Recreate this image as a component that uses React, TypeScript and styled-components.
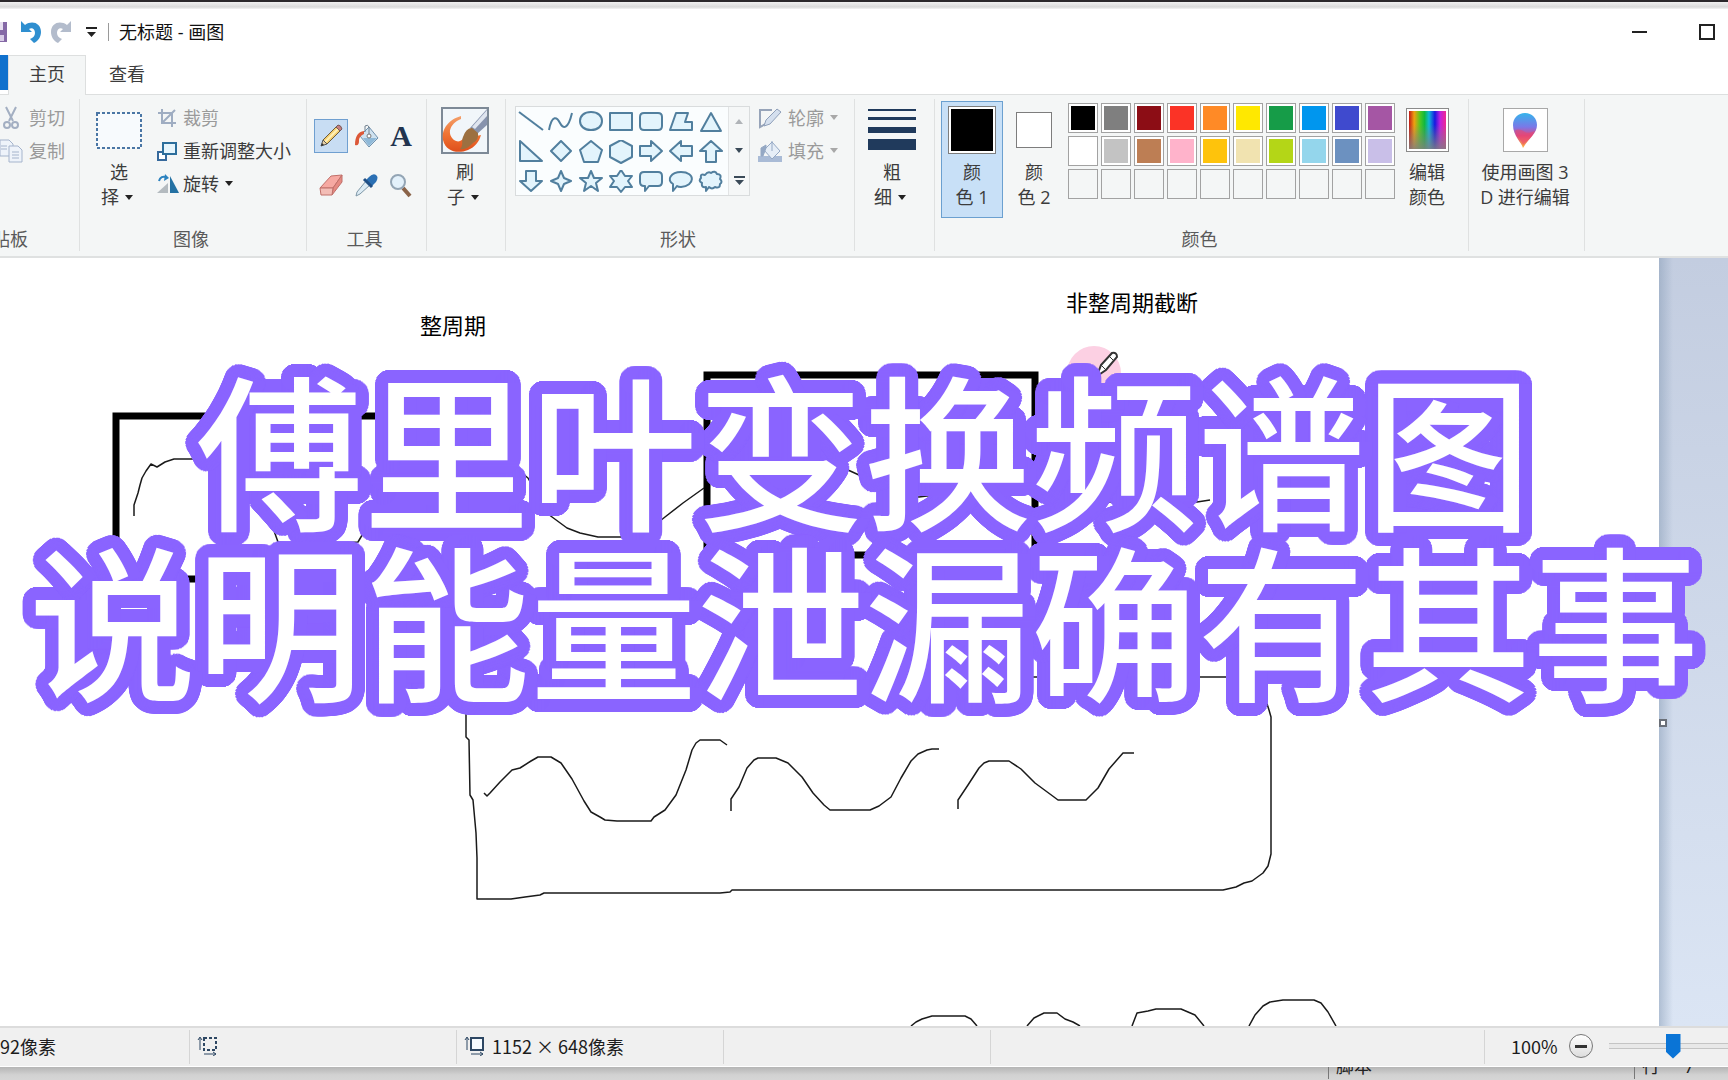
import React from "react";
import styled, { createGlobalStyle } from "styled-components";

const UI_FONT = '"Open Sans", "Noto Sans CJK SC", "Noto Sans", sans-serif';

const GlobalStyle = createGlobalStyle`
  *, *::before, *::after { box-sizing: border-box; }
  body { margin: 0; background: #ffffff; font-family: ${UI_FONT}; font-size: 18px; color: #3c3c3c; }
  button, input { font: inherit; color: inherit; margin: 0; padding: 0; border: 0; background: none; }
  svg { display: block; flex: none; }
`;

/* ---------- frame ---------- */

const Screen = styled.div`
  position: relative;
  display: flex;
  flex-direction: column;
  min-height: 100vh;
  overflow: hidden;
`;

const TopEdge = styled.div`
  height: 9px;
  border-top: 2px solid #2b282b;
  background: linear-gradient(#f0f0f0, #dadada 70%, #f4f4f4);
`;

const TitleBar = styled.header`
  display: flex;
  align-items: center;
  height: 46px;
  background: #ffffff;
`;

const QuickTools = styled.div`
  display: flex;
  align-items: center;
  gap: 10px;
`;

const QuickButton = styled.button<{ $w: number }>`
  display: flex;
  justify-content: flex-end;
  width: ${(p) => p.$w}px;
  height: 24px;
  align-items: center;
`;

const TitleRule = styled.span`
  width: 1px;
  height: 18px;
  margin: 0 10px 0 11px;
  background: #9a9a9a;
`;

const Title = styled.h1`
  margin: 0;
  font-size: 18px;
  font-weight: 400;
  line-height: 24px;
  color: #111111;
`;

const WindowControls = styled.div`
  display: flex;
  margin-left: auto;
  margin-right: -12px;
`;

const WindowButton = styled.button`
  display: flex;
  align-items: center;
  justify-content: center;
  width: 67px;
  height: 46px;
`;

const TabStrip = styled.nav`
  display: flex;
  height: 40px;
  background: #ffffff;
  border-bottom: 1px solid #dddfdf;
`;

const FileTab = styled.button`
  width: 8px;
  height: 35px;
  background: #1071cd;
`;

const Tab = styled.button<{ $active?: boolean }>`
  width: ${(p) => (p.$active ? 78 : 82)}px;
  height: 40px;
  padding-bottom: 4px;
  border: 1px solid ${(p) => (p.$active ? "#dddfdf" : "transparent")};
  border-bottom: 0;
  background: ${(p) => (p.$active ? "#f4f6f6" : "transparent")};
  line-height: 30px;
`;

/* ---------- ribbon ---------- */

const Ribbon = styled.section`
  display: flex;
  height: 163px;
  padding: 4px 0 5px;
  background: #f4f6f6;
  border-bottom: 2px solid #dfe1e1;
`;

const Group = styled.div<{ $w: number }>`
  display: flex;
  flex-direction: column;
  flex: none;
  width: ${(p) => p.$w}px;
  border-right: 1px solid #dfe1e1;
  overflow: hidden;
`;

const GroupBody = styled.div<{ $pad?: number }>`
  display: flex;
  flex: 1;
  align-items: flex-start;
  padding: 2px 0 0 ${(p) => p.$pad ?? 0}px;
`;

const GroupLabel = styled.div`
  line-height: 24px;
  text-align: center;
  color: #5a5a5a;
  height: 24px;
  padding-right: 4px;
`;

const CutLabel = styled(GroupLabel)`
  display: flex;
  justify-content: flex-end;
  width: 28px;
  padding-right: 0;
  white-space: nowrap;
`;

const BigButton = styled.button<{ $w: number; $active?: boolean }>`
  display: flex;
  flex-direction: column;
  align-items: center;
  gap: 7px;
  flex: none;
  width: ${(p) => p.$w}px;
  height: 117px;
  padding-top: 5px;
  border: 1px solid ${(p) => (p.$active ? "#6ba0d0" : "transparent")};
  background: ${(p) => (p.$active ? "#c8e0f7" : "transparent")};
`;

const BigIcon = styled.span`
  display: flex;
  align-items: center;
  justify-content: center;
  height: 46px;
`;

const BigText = styled.span`
  line-height: 25px;
  text-align: center;
  white-space: nowrap;
`;

const WithCaret = styled.span`
  display: flex;
  align-items: center;
  justify-content: center;
  gap: 6px;
  padding-right: 4px;
`;

const Rows = styled.div<{ $gap: number }>`
  display: flex;
  flex-direction: column;
  margin-left: ${(p) => p.$gap}px;
`;

const RowButton = styled.button<{ $dim?: boolean; $icon: number }>`
  display: grid;
  grid-template-columns: ${(p) => p.$icon}px auto auto;
  align-items: center;
  justify-content: start;
  gap: 6px;
  height: 33px;
  line-height: 24px;
  white-space: nowrap;
  color: ${(p) => (p.$dim ? "#9a9a9a" : "#3c3c3c")};
`;

const ToolGrid = styled.div`
  display: grid;
  grid-template-columns: repeat(3, 34px);
  grid-auto-rows: 34px;
  gap: 15px 1px;
  padding-top: 18px;
`;

const ToolButton = styled.button<{ $active?: boolean }>`
  display: flex;
  align-items: center;
  justify-content: center;
  border: 1px solid ${(p) => (p.$active ? "#6f9fd0" : "transparent")};
  background: ${(p) => (p.$active ? "#c8ddf3" : "transparent")};
`;

const LetterA = styled.span`
  font: bold 30px "Liberation Serif", serif;
  color: #22344f;
`;

const Gallery = styled.div`
  display: flex;
  margin-top: 5px;
  border: 1px solid #d9dcdd;
  background: #fafdfe;
`;

const ShapeGrid = styled.div`
  display: grid;
  grid-template-columns: repeat(7, 30px);
  grid-auto-rows: 30px;
  height: 88px;
  width: 212px;
`;

const ShapeButton = styled.button`
  display: flex;
  align-items: center;
  justify-content: center;
  height: 30px;
`;

const GalleryScroll = styled.div`
  display: grid;
  grid-template-rows: repeat(3, 1fr);
  width: 21px;
  border-left: 1px solid #e2e4e5;
  background: #f5f7f7;
`;

const ScrollButton = styled.button`
  display: flex;
  align-items: center;
  justify-content: center;
`;

const Swatch = styled.span<{ $size: number; $color: string }>`
  width: ${(p) => p.$size}px;
  height: ${(p) => p.$size}px;
  padding: 2px;
  border: 1px solid #7d7d7d;
  background: linear-gradient(${(p) => p.$color}, ${(p) => p.$color}) content-box, #ffffff;
`;

const Palette = styled.div`
  display: grid;
  grid-template-columns: repeat(10, 30px);
  grid-auto-rows: 30px;
  gap: 3px;
  padding-top: 2px;
  margin: 0 1px 0 3px;
`;

const PaletteButton = styled.button<{ $color?: string }>`
  padding: 2px;
  border: 1px solid #a2a2a2;
  background: ${(p) => (p.$color ? `linear-gradient(${p.$color}, ${p.$color}) content-box, #ffffff` : "transparent")};
`;

const Spectrum = styled.span`
  width: 43px;
  height: 44px;
  padding: 2px;
  border: 1px solid #8a8a8a;
  background:
    linear-gradient(transparent 35%, rgba(128, 128, 128, 0.85)) content-box,
    linear-gradient(90deg, #c01818, #f0a010 14%, #50c820 30%, #10b840 42%, #10b8d8 54%, #1818e0 70%, #c020e0 84%, #f02890) content-box,
    #ffffff;
`;

const IconFrame = styled.span`
  display: flex;
  align-items: center;
  justify-content: center;
  width: 45px;
  height: 44px;
  border: 1px solid #a8a8a8;
  background: #ffffff;
`;

/* ---------- canvas ---------- */

const Workspace = styled.main`
  display: flex;
  flex: 1;
  height: 768px;
`;

const Paper = styled.div`
  position: relative;
  flex: 1;
  background: #ffffff;
  overflow: hidden;
`;

const CanvasText = styled.span<{ $x: number; $y: number }>`
  position: absolute;
  left: ${(p) => p.$x}px;
  top: ${(p) => p.$y}px;
  font-size: 22px;
  line-height: 30px;
  color: #000000;
  white-space: nowrap;
`;

const Backdrop = styled.div`
  display: flex;
  align-items: center;
  width: 69px;
  padding-top: 162px;
  background:
    linear-gradient(90deg, rgba(140, 160, 185, 0.55), transparent 14px),
    linear-gradient(#c3cde0, #dbe5f4);
`;

const ResizeHandle = styled.span`
  width: 8px;
  height: 8px;
  border: 2px solid #6a6f78;
  background: #ffffff;
`;

/* ---------- status ---------- */

const StatusBar = styled.footer`
  display: flex;
  height: 41px;
  padding: 2px 0;
  background: #f0f0f0;
  border-top: 2px solid #dcdcdc;
  border-bottom: 1px solid #ffffff;
  font-family: "Noto Sans CJK SC", sans-serif;
  color: #1c1c1c;
`;

const StatusCell = styled.div<{ $w?: number }>`
  display: flex;
  align-items: center;
  gap: 8px;
  flex: ${(p) => (p.$w ? "none" : "1")};
  width: ${(p) => (p.$w ? `${p.$w}px` : "auto")};
  padding-left: 7px;
  border-right: 1px solid #d5d5d5;
  line-height: 22px;
  padding-bottom: 2px;
  white-space: nowrap;
`;

const FirstCell = styled(StatusCell)`
  padding-left: 0;
`;

const ZoomArea = styled.div`
  display: flex;
  flex: none;
  align-items: center;
  width: 243px;
  padding: 0 0 2px 26px;
  overflow: hidden;
`;

const ZoomValue = styled.label`
  flex: none;
  width: 58px;
  line-height: 22px;
`;

const ZoomOut = styled.button`
  width: 24px;
  height: 24px;
  flex: none;
  border: 1px solid #777777;
  border-radius: 50%;
  background: linear-gradient(#333333, #333333) center / 12px 3px no-repeat, linear-gradient(#ffffff, #dddddd);
`;

const ZoomSlider = styled.input`
  appearance: none;
  flex: none;
  width: 128px;
  height: 26px;
  margin-left: 16px;
  background: linear-gradient(#e8e8e8, #e8e8e8) center / 100% 4px no-repeat, linear-gradient(#c4c4c4, #c4c4c4) center / 100% 6px no-repeat;

  &::-webkit-slider-thumb {
    appearance: none;
    width: 15px;
    height: 25px;
    background: #0a74d6;
    clip-path: polygon(0 0, 100% 0, 100% 72%, 50% 100%, 0 72%);
  }
`;

const UnderStrip = styled.div`
  display: flex;
  justify-content: flex-end;
  height: 14px;
  overflow: hidden;
  background: linear-gradient(#b5b5b5, #d2d2d2 8px, #d6d6d6);
  color: #222222;
`;

const UnderCell = styled.div<{ $w: number }>`
  display: flex;
  align-items: flex-end;
  gap: 24px;
  width: ${(p) => p.$w}px;
  height: 12px;
  padding: 0 0 2px 7px;
  border-left: 1px solid #777777;
  line-height: 22px;
  white-space: nowrap;
`;

/* ---------- caption ---------- */

const OUTLINE = "#8a64ff";

/* a disc of hard shadows gives the caption a thick outline with round corners */
const ring = (radius: number, steps: number) =>
  Array.from({ length: steps }, (_, i) => {
    const a = (i / steps) * Math.PI * 2;
    return `${(Math.cos(a) * radius).toFixed(2)}px ${(Math.sin(a) * radius).toFixed(2)}px 0 ${OUTLINE}`;
  });

const outlineShadow = [...ring(13, 56), ...ring(7, 20)].join(", ");

const Caption = styled.div`
  position: absolute;
  inset: 0;
  display: flex;
  align-items: center;
  justify-content: center;
  padding-bottom: 20px;
  pointer-events: none;
`;

const CaptionText = styled.p`
  margin: 0;
  font-family: "Noto Sans CJK SC", sans-serif;
  font-size: 167px;
  font-weight: 500;
  line-height: 171px;
  text-align: center;
  white-space: nowrap;
  color: #ffffff;
  text-shadow: ${outlineShadow};
`;

/* ---------- icons ---------- */

const Caret = ({ color = "#222222" }: { color?: string }) => (
  <svg width="8" height="5" viewBox="0 0 8 5"><path d="M0 0h8L4 5z" fill={color} /></svg>
);

const SaveIcon = () => (
  <svg width="8" height="22" viewBox="0 0 8 22">
    <path d="M0 1h7v20H0z" fill="#8569a6" /><path d="M0 1h3v8H0z" fill="#e6deef" /><path d="M0 14h4v6H0z" fill="#d8cce6" />
  </svg>
);

const UndoIcon = ({ redo }: { redo?: boolean }) => (
  <svg width="21" height="22" viewBox="0 0 21 22">
    <g transform={redo ? "translate(21 0) scale(-1 1)" : undefined} fill={redo ? "#b3bccc" : "#2f8fd0"}>
      <path d="M1 0v11h11L9 8c3-2 6 0 6 4 0 3-2 5-5 6l4 4c4-2 7-6 7-11C21 2 12-1 5 4z" />
    </g>
  </svg>
);

const CustomizeIcon = () => (
  <svg width="11" height="10" viewBox="0 0 11 10"><path d="M0 0h11v2H0zM1 5h9L5.500 10z" fill="#222" /></svg>
);

const ScissorsIcon = () => (
  <svg width="24" height="24" viewBox="0 0 24 24" fill="none" stroke="#a3afc2" strokeWidth="2">
    <path d="M6 1l7 14M16 1L9 15" /><circle cx="7" cy="19" r="3" /><circle cx="15" cy="19" r="3" />
  </svg>
);

const CopyIcon = () => (
  <svg width="24" height="24" viewBox="0 0 24 24" fill="#eef3fa" stroke="#a5b4cc">
    <path d="M0 1h9l4 4v12H0z" /><path d="M9 7h9l4 4v12H9z" /><path d="M12 13h7M12 16h7M12 19h7M1 7h6M1 10h6" />
  </svg>
);

const SelectIcon = () => (
  <svg width="46" height="37" viewBox="0 0 46 37">
    <rect x="1" y="1" width="44" height="35" fill="#f7fafd" stroke="#4a76a5" strokeWidth="2" strokeDasharray="3 2" />
  </svg>
);

const CropIcon = () => (
  <svg width="20" height="20" viewBox="0 0 20 20" fill="none" stroke="#9fadc2" strokeWidth="2">
    <path d="M5 1v14h14M1 5h14v14M6 14L18 2" />
  </svg>
);

const ResizeIcon = () => (
  <svg width="20" height="20" viewBox="0 0 20 20" strokeWidth="2">
    <rect x="1" y="11" width="8" height="8" fill="#fff" stroke="#36699c" /><rect x="6" y="2" width="13" height="11" fill="#e6f5fc" stroke="#2c6e9c" />
  </svg>
);

const RotateIcon = () => (
  <svg width="22" height="20" viewBox="0 0 22 20">
    <path d="M0 19L11 9v10z" fill="#b4bbc0" /><path d="M13 19V2l9 17z" fill="#2471a3" />
    <path d="M2 7c1-4 4-5 7-4" fill="none" stroke="#2c82bf" strokeWidth="2" /><path d="M8 0l4 4-5 3z" fill="#2c82bf" />
  </svg>
);

const PencilIcon = () => (
  <svg width="24" height="24" viewBox="0 0 24 24" strokeWidth="1">
    <path d="M4 16L17 3l4 4L8 20z" fill="#f4cf70" stroke="#6c5a3c" /><path d="M6 18L19 5" stroke="#fff0b8" strokeWidth="2" />
    <path d="M17 3l2-2q3 0 4 4l-2 2z" fill="#c78080" stroke="#775a5a" /><path d="M4 16l-2 6 6-2z" fill="#e8d2a8" stroke="#555" /><path d="M2 22l1-3 2 2z" fill="#333" />
  </svg>
);

const BucketIcon = () => (
  <svg width="25" height="25" viewBox="0 0 25 25">
    <path d="M6 12l9-9 9 11-9 9z" fill="#cfe2f0" stroke="#7091ad" /><path d="M9 14h14l-8 8z" fill="#8fb9d8" />
    <path d="M15 12V3q-1-3-4-1v6" fill="none" stroke="#70808f" /><circle cx="15" cy="12" r="2" fill="#fff" stroke="#777" />
    <path d="M10 7C4 8 1 12 1 21c3 1 4-1 4-4s1-5 5-7z" fill="#dc5838" />
  </svg>
);

const EraserIcon = () => (
  <svg width="25" height="24" viewBox="0 0 25 24" stroke="#c0706a">
    <path d="M1 15L12 3l11-1-9 13z" fill="#f6a9a2" /><path d="M14 15l9-13v7L13 22z" fill="#e58a82" /><path d="M1 15h13l-1 7H2z" fill="#f3bdb6" />
  </svg>
);

const DropperIcon = () => (
  <svg width="24" height="24" viewBox="0 0 24 24">
    <path d="M12 8l4 4L6 21l-4 2 1-4z" fill="#dcebf4" stroke="#7f98a8" /><path d="M15 4q4-4 7-2t0 7l-4 4-6-6z" fill="#2b70b4" />
    <path d="M10 6l8 8" stroke="#204f85" strokeWidth="3" />
  </svg>
);

const MagnifierIcon = () => (
  <svg width="24" height="25" viewBox="0 0 24 25">
    <path d="M14 15l7 8" stroke="#8a6348" strokeWidth="4" /><circle cx="9" cy="9" r="7" fill="#e3f1fb" stroke="#93a5b5" strokeWidth="2" />
  </svg>
);

const BrushIcon = () => (
  <svg width="48" height="47" viewBox="0 0 48 47">
    <defs>
      <linearGradient id="paint" x1="0" y1="0" x2="0" y2="1">
        <stop offset="0" stopColor="#f3a06c" /><stop offset="0.5" stopColor="#f07434" /><stop offset="1" stopColor="#df4f1c" />
      </linearGradient>
    </defs>
    <rect x="1" y="1" width="46" height="45" fill="#f1f6fa" stroke="#7d8996" strokeWidth="2" />
    <path d="M20 9C9 12 0 21 2 33c3 12 15 14 25 10 7-3 11-8 13-15l-18 4c-3 3-6 3-9 1-7-6-5-16 7-21z" fill="url(#paint)" />
    <path d="M46 2L29 21l7 6 10-9z" fill="#8793ad" /><path d="M46 3L31 20l3 2L46 9z" fill="#dfe5ef" />
    <path d="M22 30q3-9 9-9l6 5q1 7-5 10c-4 4-8 7-13 6 4-4 1-8 3-12z" fill="#9c7041" />
  </svg>
);

const OutlineIcon = () => (
  <svg width="24" height="22" viewBox="0 0 24 22">
    <path d="M14 3H2v17l9-5" fill="none" stroke="#97a4b9" strokeWidth="2" /><path d="M6 19l2-6L19 2l4 3-11 12z" fill="#d4dfee" stroke="#8fa0ba" />
  </svg>
);

const FillIcon = () => (
  <svg width="24" height="24" viewBox="0 0 24 24">
    <path d="M0 17h24v6H0z" fill="#a9bbd6" /><path d="M6 11l8-8 8 9-8 8z" fill="#e6eef7" stroke="#94a8c4" /><path d="M14 12V2M3 17V9l5-3v3l-3 8z" stroke="#94a8c4" fill="#94a8c4" />
  </svg>
);

const WeightIcon = () => (
  <svg width="48" height="42" viewBox="0 0 48 42" fill="#203a5c">
    <path d="M0 0h48v2H0zM0 8h48v3H0zM0 18h48v6H0zM0 30h48v11H0z" />
  </svg>
);

const Paint3DIcon = () => (
  <svg width="26" height="37" viewBox="0 0 26 37">
    <defs>
      <linearGradient id="drop" x1="0" y1="0" x2="0" y2="1">
        <stop offset="0" stopColor="#35b5ec" /><stop offset="0.4" stopColor="#7a78e8" /><stop offset="0.65" stopColor="#dc4884" /><stop offset="1" stopColor="#ffb43c" />
      </linearGradient>
    </defs>
    <path d="M13 1c7 0 12 5 12 12 0 9-9 14-14 23-1-5-10-12-10-23C1 6 6 1 13 1z" fill="url(#drop)" />
    <path d="M3 19c3-3 7-1 10 1s7 0 10-1c-3 6-8 10-12 14-1-4-5-8-8-14z" fill="#ef4468" opacity="0.500" />
  </svg>
);

const SizeIcon = ({ dashed }: { dashed?: boolean }) => (
  <svg width="20" height="20" viewBox="0 0 20 20" fill="none" stroke="#2d4763">
    <path d="M3 14V2M1 4l2-3 2 3M7 18h12M16 16l3 2-3 2" />
    <rect x="7" y="2" width="12" height="12" fill={dashed ? "none" : "#f6fbff"} strokeWidth="2" strokeDasharray={dashed ? "3 2" : undefined} />
  </svg>
);

const shapes: { name: string; d: string }[] = [
  { name: "直线", d: "M1 2L25 20" },
  { name: "曲线", d: "M1 20C4 4 9 7 12 13S20 20 24 3" },
  { name: "椭圆", d: "M13 2C20 2 24 6 24 11S20 20 13 20 2 16 2 11 6 2 13 2z" },
  { name: "矩形", d: "M2 3h22v17H2z" },
  { name: "圆角矩形", d: "M6 3h14q4 0 4 4v9q0 4-4 4H6q-4 0-4-4V7q0-4 4-4z" },
  { name: "多边形", d: "M8 3h12l-3 9h7v8H2z" },
  { name: "三角形", d: "M13 3l10 18H3z" },
  { name: "直角三角形", d: "M2 1v20h22z" },
  { name: "菱形", d: "M13 1l10 10-10 10L3 11z" },
  { name: "五边形", d: "M13 1l11 9-4 12H6L2 10z" },
  { name: "六边形", d: "M13 0l11 6v11l-11 6-11-6V6z" },
  { name: "右箭头", d: "M2 6h11V1l11 10-11 10v-5H2z" },
  { name: "左箭头", d: "M24 6H13V1L2 11l11 10v-5h11z" },
  { name: "上箭头", d: "M8 22V11H2L13 1l11 10h-6v11z" },
  { name: "下箭头", d: "M8 1v10H2l11 10 11-10h-6V1z" },
  { name: "四角星", d: "M13 1l3 7 7 3-7 3-3 7-3-7-7-3 7-3z" },
  { name: "五角星", d: "M13 1l3 7h8l-6 5 2 8-7-5-7 5 2-8-6-5h8z" },
  { name: "六角星", d: "M13 0l4 6h7l-4 5 4 6h-7l-4 5-4-5H2l4-6-4-5h7z" },
  { name: "圆角矩形标注", d: "M6 2h14q4 0 4 4v6q0 4-4 4h-9l-4 5v-5H6q-4 0-4-4V6q0-4 4-4z" },
  { name: "椭圆形标注", d: "M13 2c15 0 14 14 0 15-2 0-3 0-4-1l-4 5v-7C-2 10 3 2 13 2z" },
  { name: "云形标注", d: "M7 5q3-4 6-2 4-3 6 1 5 0 3 5 3 3 0 5 0 5-5 3-3 3-6 0l-3 4v-4q-5 1-4-4-4-2-1-5-1-5 4-3z" },
];

const ShapeIcon = ({ d, open }: { d: string; open: boolean }) => (
  <svg width="26" height="24" viewBox="0 0 26 24">
    <path d={d} fill={open ? "none" : "#e3f4fc"} stroke="#517f9e" strokeWidth="2" strokeLinejoin="round" />
  </svg>
);

const paletteColors: (string | undefined)[] = [
  "#000000", "#7f7f7f", "#8c0d15", "#fb3326", "#ff8a26", "#ffe800", "#169c48", "#0096ee", "#3f4ace", "#a556a4",
  "#ffffff", "#c3c3c3", "#bd7e54", "#ffb3cb", "#fec30c", "#f1e3b0", "#b4d617", "#94d6ec", "#6c91c0", "#c9bfe8",
  ...Array(10).fill(undefined),
];

/* freehand strokes, in canvas coordinates */
const strokes = [
  "134,258 134,247 138,235 140,227 142,220 146,213 151,206 157,209 165,204 174,201 230,201 250,232 267,262 273,270 278,284 310,287 358,284 390,230 430,201 500,197 528,220 548,256 567,270 580,275 598,279 640,279 665,259 683,245 704,230",
  "800,204 830,204 848,212 859,217 880,236 919,239 950,235",
  "1100,244 1197,244 1210,242",
  "466,455 466,479 469,482 470,537 473,542 476,575 477,600 477,641 511,641 525,639 540,637 544,635 720,635 730,634 732,632 1223,632 1236,629 1244,625 1252,623 1263,615 1268,608 1271,596 1271,459 1269,452 1262,430 1231,419 1000,419",
  "484,535 487,538 490,535 500,524 512,512 520,510 531,503 538,499 551,499 561,505 572,521 584,543 591,554 600,559 605,562 617,563 651,563 654,559 665,552 676,537 686,512 692,492 696,485 700,482 720,482 727,487",
  "731,553 731,541 739,529 747,510 754,502 758,500 776,500 788,505 795,512 802,519 813,535 824,547 830,552 836,552 870,552 879,548 891,539 901,520 911,503 918,496 927,492 932,491 939,491",
  "958,551 958,542 968,527 979,510 984,505 989,503 1009,503 1021,511 1035,525 1054,539 1058,542 1064,542 1086,542 1098,530 1109,511 1123,495 1134,495",
  "911,768 916,764 922,761 932,758 965,758 971,761 977,768",
  "1027,768 1034,760 1044,755 1057,755 1065,761 1073,764 1080,768",
  "1132,768 1137,755 1148,753 1156,751 1181,751 1195,757 1204,768",
  "1249,768 1255,757 1263,748 1270,744 1283,742 1314,742 1321,745 1328,754 1336,768",
];

const Drawing = () => (
  <svg width="1660" height="768" viewBox="0 0 1660 768" fill="none" stroke="#1a1a1a">
    <circle cx="1094" cy="115" r="27" fill="#fcd0e3" stroke="none" />
    <g stroke="#000000" strokeWidth="7">
      <rect x="116" y="158" width="300" height="163" />
      <rect x="707" y="117" width="328" height="180" />
    </g>
    {strokes.map((points) => (
      <polyline key={points} points={points} strokeWidth="1.500" strokeLinejoin="round" />
    ))}
    <path d="M1097 118l4-11 11-12q5-1 5 4l-11 13z" fill="#fff" stroke="#333" strokeWidth="2" />
    <path d="M1101 107l5 5M1109 98l5 5" stroke="#333" />
  </svg>
);

/* ---------- app ---------- */

export default function App() {
  return (
    <Screen>
      <GlobalStyle />
      <TopEdge />
      <TitleBar>
        <QuickTools>
          <QuickButton $w={8} aria-label="保存"><SaveIcon /></QuickButton>
          <QuickButton $w={23} aria-label="撤消"><UndoIcon /></QuickButton>
          <QuickButton $w={21} aria-label="重做"><UndoIcon redo /></QuickButton>
          <QuickButton $w={15} aria-label="自定义快速访问工具栏"><CustomizeIcon /></QuickButton>
        </QuickTools>
        <TitleRule />
        <Title>无标题 - 画图</Title>
        <WindowControls>
          <WindowButton aria-label="最小化">
            <svg width="15" height="2"><path d="M0 0h15v2H0z" fill="#222" /></svg>
          </WindowButton>
          <WindowButton aria-label="最大化">
            <svg width="16" height="16"><rect x="1" y="1" width="14" height="14" fill="none" stroke="#222" strokeWidth="2" /></svg>
          </WindowButton>
        </WindowControls>
      </TitleBar>

      <TabStrip>
        <FileTab aria-label="文件" />
        <Tab $active>主页</Tab>
        <Tab>查看</Tab>
      </TabStrip>

      <Ribbon>
        <Group $w={80}>
          <GroupBody>
            <Rows $gap={0}>
              <RowButton $dim $icon={23}><ScissorsIcon />剪切</RowButton>
              <RowButton $dim $icon={23}><CopyIcon />复制</RowButton>
            </Rows>
          </GroupBody>
          <CutLabel>贴板</CutLabel>
        </Group>

        <Group $w={227}>
          <GroupBody $pad={8}>
            <BigButton $w={62}>
              <BigIcon><SelectIcon /></BigIcon>
              <BigText>选<WithCaret>择<Caret /></WithCaret></BigText>
            </BigButton>
            <Rows $gap={7}>
              <RowButton $dim $icon={20}><CropIcon />裁剪</RowButton>
              <RowButton $icon={20}><ResizeIcon />重新调整大小</RowButton>
              <RowButton $icon={20}><RotateIcon />旋转<Caret /></RowButton>
            </Rows>
          </GroupBody>
          <GroupLabel>图像</GroupLabel>
        </Group>

        <Group $w={120}>
          <GroupBody $pad={7}>
            <ToolGrid>
              <ToolButton $active aria-label="铅笔"><PencilIcon /></ToolButton>
              <ToolButton aria-label="用颜色填充"><BucketIcon /></ToolButton>
              <ToolButton aria-label="文本"><LetterA>A</LetterA></ToolButton>
              <ToolButton aria-label="橡皮擦"><EraserIcon /></ToolButton>
              <ToolButton aria-label="颜色选取器"><DropperIcon /></ToolButton>
              <ToolButton aria-label="放大镜"><MagnifierIcon /></ToolButton>
            </ToolGrid>
          </GroupBody>
          <GroupLabel>工具</GroupLabel>
        </Group>

        <Group $w={79}>
          <GroupBody $pad={7}>
            <BigButton $w={62}>
              <BigIcon><BrushIcon /></BigIcon>
              <BigText>刷<WithCaret>子<Caret /></WithCaret></BigText>
            </BigButton>
          </GroupBody>
        </Group>

        <Group $w={349}>
          <GroupBody $pad={9}>
            <Gallery>
              <ShapeGrid>
                {shapes.map((s, i) => (
                  <ShapeButton key={s.name} aria-label={s.name}><ShapeIcon d={s.d} open={i < 2} /></ShapeButton>
                ))}
              </ShapeGrid>
              <GalleryScroll>
                <ScrollButton aria-label="上一行">
                  <svg width="8" height="5"><path d="M0 5h8L4 0z" fill="#b0b4b8" /></svg>
                </ScrollButton>
                <ScrollButton aria-label="下一行"><Caret color="#3a4a58" /></ScrollButton>
                <ScrollButton aria-label="更多"><svg width="11" height="9"><path d="M0 0h11v2H0zM1 4h9L5.500 9z" fill="#3a4a58" /></svg></ScrollButton>
              </GalleryScroll>
            </Gallery>
            <Rows $gap={8}>
              <RowButton $dim $icon={24}><OutlineIcon />轮廓<Caret color="#a8a8a8" /></RowButton>
              <RowButton $dim $icon={24}><FillIcon />填充<Caret color="#a8a8a8" /></RowButton>
            </Rows>
          </GroupBody>
          <GroupLabel>形状</GroupLabel>
        </Group>

        <Group $w={80}>
          <GroupBody $pad={6}>
            <BigButton $w={62}>
              <BigIcon><WeightIcon /></BigIcon>
              <BigText>粗<WithCaret>细<Caret /></WithCaret></BigText>
            </BigButton>
          </GroupBody>
        </Group>

        <Group $w={534}>
          <GroupBody $pad={6}>
            <BigButton $w={62} $active>
              <BigIcon><Swatch $size={48} $color="#000000" /></BigIcon>
              <BigText>颜<br />色 1</BigText>
            </BigButton>
            <BigButton $w={62}>
              <BigIcon><Swatch $size={36} $color="#ffffff" /></BigIcon>
              <BigText>颜<br />色 2</BigText>
            </BigButton>
            <Palette>
              {paletteColors.map((c, i) => (
                <PaletteButton key={i} $color={c} aria-label={c ? `颜色 ${c}` : "自定义颜色"} />
              ))}
            </Palette>
            <BigButton $w={62}>
              <BigIcon><Spectrum /></BigIcon>
              <BigText>编辑<br />颜色</BigText>
            </BigButton>
          </GroupBody>
          <GroupLabel>颜色</GroupLabel>
        </Group>

        <Group $w={116}>
          <GroupBody $pad={5}>
            <BigButton $w={102}>
              <BigIcon><IconFrame><Paint3DIcon /></IconFrame></BigIcon>
              <BigText>使用画图 3<br />D 进行编辑</BigText>
            </BigButton>
          </GroupBody>
        </Group>
      </Ribbon>

      <Workspace>
        <Paper>
          <Drawing />
          <CanvasText $x={420} $y={52}>整周期</CanvasText>
          <CanvasText $x={1066} $y={29}>非整周期截断</CanvasText>
        </Paper>
        <Backdrop><ResizeHandle /></Backdrop>
      </Workspace>

      <StatusBar>
        <FirstCell $w={190}>92像素</FirstCell>
        <StatusCell $w={267}><SizeIcon dashed /></StatusCell>
        <StatusCell $w={267}><SizeIcon />1152 × 648像素</StatusCell>
        <StatusCell $w={267} />
        <StatusCell />
        <ZoomArea>
          <ZoomValue htmlFor="zoom">100%</ZoomValue>
          <ZoomOut aria-label="缩小" />
          <ZoomSlider id="zoom" type="range" min={0} max={100} defaultValue={50} />
        </ZoomArea>
      </StatusBar>
      <UnderStrip>
        <UnderCell $w={400 - 94}>脚本</UnderCell>
        <UnderCell $w={94}><span>行</span><span>7</span></UnderCell>
      </UnderStrip>

      <Caption>
        <CaptionText>傅里叶变换频谱图<br />说明能量泄漏确有其事</CaptionText>
      </Caption>
    </Screen>
  );
}
